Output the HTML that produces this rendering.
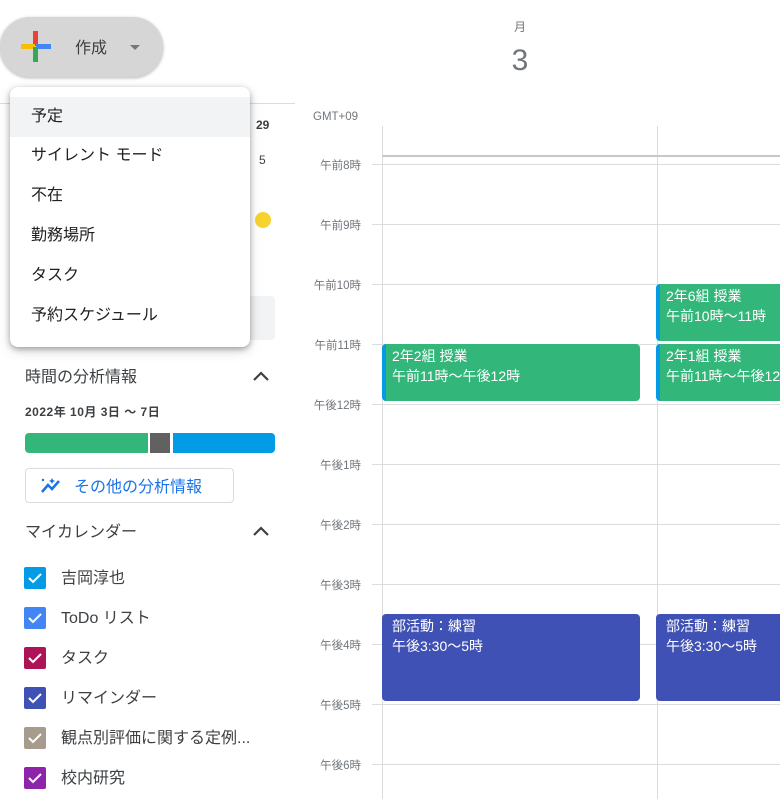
<!DOCTYPE html>
<html><head><meta charset="utf-8"><style>
*{margin:0;padding:0;box-sizing:border-box}
body{width:780px;height:799px;overflow:hidden;background:#fff;font-family:"Liberation Sans","Noto Sans CJK JP",sans-serif;position:relative;color:#3c4043}
.a{position:absolute}
.hl{position:absolute;left:372px;width:408px;height:1px;background:#dadce0}
.tl{position:absolute;width:70px;text-align:right;left:291px;font-size:11.5px;color:#70757a}
.ev{position:absolute;border-radius:4px;color:#fff;font-size:14px;line-height:20px;padding:2px 0 0 10px;overflow:hidden;white-space:nowrap}
.g{background:#33b679;border-left:4px solid #039be5;padding-left:6px}
.p{background:#3f51b5}
.mi{position:absolute;left:10px;width:240px;height:40px;line-height:40px;padding-left:21px;font-size:16px;color:#202124}
.cb{position:absolute;left:24px;width:22px;height:22px;border-radius:2px}
.cb svg{position:absolute;left:2px;top:2px}
.cl{position:absolute;left:61px;font-size:16px;color:#3c4043}
</style></head><body>
<div class="a" style="left:505px;top:18px;font-size:12px;color:#70757a;width:30px;text-align:center">月</div>
<div class="a" style="left:500px;top:44px;font-size:30px;color:#70757a;width:40px;text-align:center">3</div>
<div class="a" style="left:313px;top:111px;font-size:11.5px;color:#70757a">GMT+09</div>
<div class="a" style="left:382px;top:126px;width:1px;height:673px;background:#dadce0"></div>
<div class="a" style="left:657px;top:126px;width:1px;height:673px;background:#dadce0"></div>
<div class="a" style="left:382px;top:155px;width:398px;height:2px;background:#c8c8c8"></div>
<div class="hl" style="top:164px"></div><div class="tl" style="top:157px">午前8時</div>
<div class="hl" style="top:224px"></div><div class="tl" style="top:217px">午前9時</div>
<div class="hl" style="top:284px"></div><div class="tl" style="top:277px">午前10時</div>
<div class="hl" style="top:344px"></div><div class="tl" style="top:337px">午前11時</div>
<div class="hl" style="top:404px"></div><div class="tl" style="top:397px">午後12時</div>
<div class="hl" style="top:464px"></div><div class="tl" style="top:457px">午後1時</div>
<div class="hl" style="top:524px"></div><div class="tl" style="top:517px">午後2時</div>
<div class="hl" style="top:584px"></div><div class="tl" style="top:577px">午後3時</div>
<div class="hl" style="top:644px"></div><div class="tl" style="top:637px">午後4時</div>
<div class="hl" style="top:704px"></div><div class="tl" style="top:697px">午後5時</div>
<div class="hl" style="top:764px"></div><div class="tl" style="top:757px">午後6時</div>
<div class="ev g" style="left:382px;top:344px;width:258px;height:57px">2年2組 授業<br>午前11時～午後12時</div>
<div class="ev g" style="left:656px;top:284px;width:130px;height:57px">2年6組 授業<br>午前10時～11時</div>
<div class="ev g" style="left:656px;top:344px;width:130px;height:57px">2年1組 授業<br>午前11時～午後12時</div>
<div class="ev p" style="left:382px;top:614px;width:258px;height:87px">部活動：練習<br>午後3:30～5時</div>
<div class="ev p" style="left:656px;top:614px;width:130px;height:87px">部活動：練習<br>午後3:30～5時</div>
<div class="a" style="left:0;top:103px;width:295px;height:1px;background:#dadce0"></div>
<div class="a" style="left:256px;top:118px;font-size:12px;font-weight:bold;color:#3c4043">29</div>
<div class="a" style="left:259px;top:153px;font-size:12px;color:#3c4043">5</div>
<div class="a" style="left:255px;top:212px;width:16px;height:16px;border-radius:50%;background:#f6d32d"></div>
<div class="a" style="left:240px;top:296px;width:35px;height:44px;background:#f1f3f4;border-radius:4px"></div>
<div class="a" style="left:0;top:17px;width:163px;height:60px;border-radius:30px;background:#d6d6d6;box-shadow:0 1px 3px rgba(0,0,0,.3)"></div>
<svg class="a" style="left:20px;top:31px" width="32" height="32" viewBox="0 0 32 32"><rect x="13" y="0" width="5" height="15" fill="#ea4335"/><rect x="1" y="13" width="14" height="5" fill="#fbbc04"/><rect x="16" y="13" width="15" height="5" fill="#4285f4"/><rect x="13" y="16" width="5" height="15" fill="#34a853"/></svg>
<div class="a" style="left:75px;top:34px;font-size:16px;color:#3c4043">作成</div>
<div class="a" style="left:130px;top:45px;width:0;height:0;border-left:5px solid transparent;border-right:5px solid transparent;border-top:5px solid #777"></div>
<div class="a" style="left:10px;top:87px;width:240px;height:260px;background:#fff;border-radius:8px;box-shadow:0 2px 6px rgba(0,0,0,.3),0 4px 12px rgba(0,0,0,.15)"></div>
<div class="mi" style="top:97px;background:#f1f3f4">予定</div>
<div class="mi" style="top:136px">サイレント モード</div>
<div class="mi" style="top:176px">不在</div>
<div class="mi" style="top:216px">勤務場所</div>
<div class="mi" style="top:256px">タスク</div>
<div class="mi" style="top:296px">予約スケジュール</div>
<div class="a" style="left:25px;top:363px;font-size:16px">時間の分析情報</div>
<svg class="a" style="left:252px;top:370px" width="18" height="12" viewBox="0 0 18 12"><path d="M2 10 L9 3 L16 10" stroke="#3c4043" stroke-width="2.2" fill="none"/></svg>
<div class="a" style="left:25px;top:403px;font-size:12px;font-weight:bold;letter-spacing:.5px">2022年 10月 3日 ～ 7日</div>
<div class="a" style="left:25px;top:433px;width:123px;height:20px;background:#33b679;border-radius:4px 0 0 4px"></div>
<div class="a" style="left:150px;top:433px;width:20px;height:20px;background:#616161"></div>
<div class="a" style="left:173px;top:433px;width:102px;height:20px;background:#039be5;border-radius:0 4px 4px 0"></div>
<div class="a" style="left:25px;top:468px;width:209px;height:35px;border:1px solid #dadce0;border-radius:4px"></div>
<svg class="a" style="left:40px;top:476px" width="24" height="20" viewBox="0 0 24 20"><path d="M2 16 L8 9 L12 13 L19 5" stroke="#1a73e8" stroke-width="2.5" fill="none"/><circle cx="3" cy="4" r="1.2" fill="#1a73e8"/><path d="M12 2 l1 2 2 1 -2 1 -1 2 -1 -2 -2 -1 2 -1z" fill="#1a73e8"/></svg>
<div class="a" style="left:74px;top:473px;font-size:16px;color:#1a73e8">その他の分析情報</div>
<div class="a" style="left:25px;top:518px;font-size:16px">マイカレンダー</div>
<svg class="a" style="left:252px;top:525px" width="18" height="12" viewBox="0 0 18 12"><path d="M2 10 L9 3 L16 10" stroke="#3c4043" stroke-width="2.2" fill="none"/></svg>
<div class="cb" style="top:567px;background:#039be5"><svg width="18" height="18"><path d="M3 9 l4 4 8-8" stroke="#fff" stroke-width="2" fill="none"/></svg></div><div class="cl" style="top:564px">吉岡淳也</div>
<div class="cb" style="top:607px;background:#4285f4"><svg width="18" height="18"><path d="M3 9 l4 4 8-8" stroke="#fff" stroke-width="2" fill="none"/></svg></div><div class="cl" style="top:604px">ToDo リスト</div>
<div class="cb" style="top:647px;background:#ad1457"><svg width="18" height="18"><path d="M3 9 l4 4 8-8" stroke="#fff" stroke-width="2" fill="none"/></svg></div><div class="cl" style="top:644px">タスク</div>
<div class="cb" style="top:687px;background:#3f51b5"><svg width="18" height="18"><path d="M3 9 l4 4 8-8" stroke="#fff" stroke-width="2" fill="none"/></svg></div><div class="cl" style="top:684px">リマインダー</div>
<div class="cb" style="top:727px;background:#a79b8e"><svg width="18" height="18"><path d="M3 9 l4 4 8-8" stroke="#fff" stroke-width="2" fill="none"/></svg></div><div class="cl" style="top:724px">観点別評価に関する定例...</div>
<div class="cb" style="top:767px;background:#8e24aa"><svg width="18" height="18"><path d="M3 9 l4 4 8-8" stroke="#fff" stroke-width="2" fill="none"/></svg></div><div class="cl" style="top:764px">校内研究</div>
</body></html>
